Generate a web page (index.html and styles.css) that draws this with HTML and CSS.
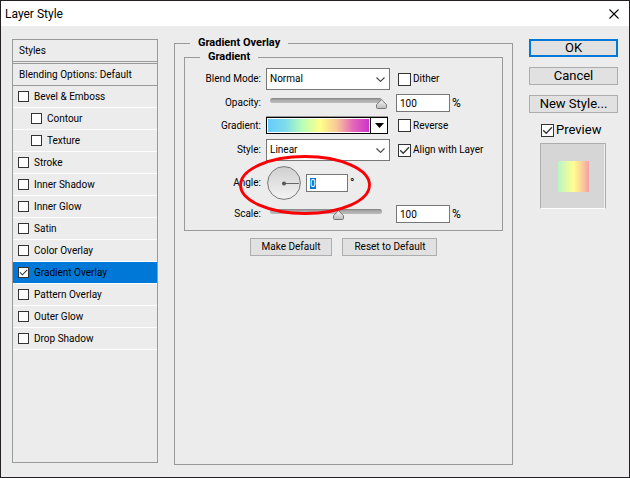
FILE: index.html
```html
<!DOCTYPE html>
<html lang="en">
<head>
  <meta charset="UTF-8">
  <meta name="viewport" content="width=device-width, initial-scale=1.0">
  <title>Layer Style</title>
  <link rel="stylesheet" href="styles.css">
</head>
<body>
  <div class="dialog">
    <header class="titlebar">
      <h1>Layer Style</h1>
      <button type="button" class="close" aria-label="Close">
        <svg width="10" height="10" viewBox="0 0 10 10"><path d="M0.5 0.5L9.5 9.5M9.5 0.5L0.5 9.5" stroke="#000" stroke-width="1.1"/></svg>
      </button>
    </header>

    <form class="content">
      <nav class="styles">
        <h2 class="styles-title">Styles</h2>
        <div class="blending">Blending Options: Default</div>
        <ul class="effects">
          <li><label><input type="checkbox">Bevel &amp; Emboss</label></li>
          <li class="sub"><label><input type="checkbox">Contour</label></li>
          <li class="sub"><label><input type="checkbox">Texture</label></li>
          <li><label><input type="checkbox">Stroke</label></li>
          <li><label><input type="checkbox">Inner Shadow</label></li>
          <li><label><input type="checkbox">Inner Glow</label></li>
          <li><label><input type="checkbox">Satin</label></li>
          <li><label><input type="checkbox">Color Overlay</label></li>
          <li class="selected"><label><input type="checkbox" checked>Gradient Overlay</label></li>
          <li><label><input type="checkbox">Pattern Overlay</label></li>
          <li><label><input type="checkbox">Outer Glow</label></li>
          <li><label><input type="checkbox">Drop Shadow</label></li>
        </ul>
      </nav>

      <fieldset class="panel">
        <legend>Gradient Overlay</legend>
        <fieldset class="group">
          <legend>Gradient</legend>
          <div class="settings">
            <label class="name" for="blend-mode">Blend Mode:</label>
            <select id="blend-mode"><option>Normal</option></select>
            <label class="check"><input type="checkbox">Dither</label>

            <label class="name" for="opacity">Opacity:</label>
            <input type="range" class="slider" value="100" aria-label="Opacity slider">
            <div class="unit-field"><input type="text" id="opacity" value="100"><span>%</span></div>

            <label class="name" for="gradient">Gradient:</label>
            <button type="button" id="gradient" class="gradient-picker">
              <span class="gradient-bar"></span>
              <span class="gradient-arrow"><svg width="9" height="5" viewBox="0 0 9 5"><path d="M0 0H9L4.5 5Z"/></svg></span>
            </button>
            <label class="check"><input type="checkbox">Reverse</label>

            <label class="name" for="style">Style:</label>
            <select id="style"><option>Linear</option></select>
            <label class="check"><input type="checkbox" checked>Align with Layer</label>

            <label class="name" for="angle">Angle:</label>
            <div class="angle">
              <svg class="dial" width="34" height="34" viewBox="0 0 34 34">
                <defs>
                  <linearGradient id="dial-fill" x1="0" y1="0" x2="0" y2="1">
                    <stop offset="0" stop-color="#cfcfcf"/>
                    <stop offset="1" stop-color="#f4f4f4"/>
                  </linearGradient>
                </defs>
                <circle cx="17" cy="17" r="16.4" fill="url(#dial-fill)" stroke="#777"/>
                <path d="M17 17.5H32" stroke="#666"/>
                <circle cx="17" cy="17.5" r="2" fill="#555"/>
              </svg>
              <input type="text" id="angle" value="0">
              <span>°</span>
              <svg class="highlight" width="134" height="62" viewBox="0 0 134 62">
                <ellipse cx="67" cy="31" rx="64.5" ry="28.5" fill="none" stroke="#fa0005" stroke-width="2.8"/>
              </svg>
            </div>

            <label class="name" for="scale">Scale:</label>
            <input type="range" class="slider" min="1" max="160" value="98" aria-label="Scale slider">
            <div class="unit-field"><input type="text" id="scale" value="100"><span>%</span></div>
          </div>
        </fieldset>
        <div class="defaults">
          <button type="button">Make Default</button>
          <button type="button">Reset to Default</button>
        </div>
      </fieldset>

      <aside class="actions">
        <button type="button" class="ok">OK</button>
        <button type="button">Cancel</button>
        <button type="button">New Style...</button>
        <div class="preview-area">
          <label class="check"><input type="checkbox" checked>Preview</label>
          <div class="preview"><div class="preview-swatch"></div></div>
        </div>
      </aside>
    </form>
  </div>

  <script>
    // Focus the angle field with its value selected
    document.getElementById("angle").select();
  </script>
</body>
</html>
```
FILE: styles.css
```css
* {
  box-sizing: border-box;
}
body {
  margin: 0;
  font-family: Roboto, "Liberation Sans", sans-serif;
  font-size: 10px;
  line-height: 14px;
  color: #000;
}
input, select, button {
  margin: 0;
  font: inherit;
  color: inherit;
}
svg {
  display: block;
}

.dialog {
  display: flex;
  flex-direction: column;
  min-height: 100vh;
  border: 1px solid #231f22;
  background-color: #ececec;
}
.titlebar {
  display: flex;
  align-items: center;
  justify-content: space-between;
  height: 25px;
  padding: 0 10px 0 4px;
  background-color: #fff;
}
.titlebar h1 {
  margin: 0;
  font-size: 12px;
  font-weight: normal;
}
.close {
  padding: 0;
  border: 0;
  background: none;
}
.content {
  flex: 1;
  display: flex;
  gap: 16px;
  padding: 13px 11px 14px;
}

/* Effect list */
.styles {
  width: 146px;
  border: 1px solid #999;
}
.styles-title, .blending {
  margin: 0;
  padding: 0 6px;
  border-bottom: 1px solid #999;
  font-size: 10px;
  font-weight: normal;
  line-height: 21px;
}
.blending {
  margin-top: 1px;
  border-top: 1px solid #999;
}
.effects {
  margin: 0;
  padding: 0;
  list-style: none;
}
.effects li {
  height: 22px;
  padding-left: 5px;
  border-bottom: 1px solid #fff;
}
.effects .sub {
  padding-left: 18px;
}
.effects .selected {
  background-color: #0078d7;
}
.effects label {
  display: flex;
  align-items: center;
  gap: 5px;
  height: 21px;
}

/* Checkboxes */
input[type="checkbox"] {
  appearance: none;
  flex: none;
  width: 13px;
  height: 13px;
  border: 1px solid #333;
  background: #fff center / 11px 11px no-repeat;
}
input[type="checkbox"]:checked {
  background-image: url("data:image/svg+xml,%3Csvg xmlns='http://www.w3.org/2000/svg' viewBox='0 0 11 11'%3E%3Cpath d='M1.2 5.3L4.2 8.3L10 2.3' fill='none' stroke='%23333' stroke-width='1.3'/%3E%3C/svg%3E");
}
.effects input[type="checkbox"] {
  width: 11px;
  height: 11px;
  background-size: 9px 9px;
}
.check {
  display: flex;
  align-items: center;
  gap: 2px;
}

/* Settings panel */
fieldset {
  min-width: 0;
  margin: 0;
  padding: 0;
  border: 1px solid #999;
}
legend {
  padding: 0 8px;
  font-size: 11px;
  font-weight: bold;
}
.panel {
  flex: 1;
  margin: -3px 0 -2px;
}
.panel > legend {
  margin-left: 15px;
}
.group {
  margin: 0 9px;
}
.group > legend {
  margin-left: 15px;
}
.settings {
  display: grid;
  grid-template-columns: 76px 124px 1fr;
  grid-template-rows: 22px 18px 19px 22px 36px 18px;
  column-gap: 5px;
  row-gap: 4px;
  align-items: center;
  padding: 4px 0 7px;
}
.settings > .check {
  margin-left: 3px;
}
.name {
  text-align: right;
}
select {
  appearance: none;
  width: 100%;
  height: 22px;
  padding: 0 3px;
  border: 1px solid #777;
  border-radius: 0;
  background: #fff right 4px center / 9px 5px no-repeat;
  background-image: url("data:image/svg+xml,%3Csvg xmlns='http://www.w3.org/2000/svg' viewBox='0 0 9 5'%3E%3Cpath d='M0.5 0.5L4.5 4.4L8.5 0.5' fill='none' stroke='%23444' stroke-width='1.1'/%3E%3C/svg%3E");
}
input[type="text"] {
  width: 54px;
  height: 18px;
  padding: 0 3px;
  border: 1px solid #777;
  background-color: #fff;
  outline: none;
}
input[type="text"]::selection {
  background-color: #0078d7;
  color: #fff;
}
.unit-field {
  display: flex;
  align-items: center;
  gap: 2px;
  margin-left: 1px;
}
.unit-field span {
  font-size: 12px;
}

/* The groove stops short of the element so the thumb can hang over both ends */
.slider {
  appearance: none;
  width: 121px;
  height: 12px;
  background: url("data:image/svg+xml,%3Csvg xmlns='http://www.w3.org/2000/svg' width='112' height='5' viewBox='0 0 112 5'%3E%3Cdefs%3E%3ClinearGradient id='t' x2='0' y2='1'%3E%3Cstop stop-color='%23808080'/%3E%3Cstop offset='.4' stop-color='%23aaa'/%3E%3Cstop offset='1' stop-color='%23bbb'/%3E%3C/linearGradient%3E%3C/defs%3E%3Crect width='112' height='5' rx='2.5' fill='url(%23t)'/%3E%3C/svg%3E") 4px 1px no-repeat;
}
.slider::-webkit-slider-runnable-track {
  height: 12px;
}
.slider::-webkit-slider-thumb {
  appearance: none;
  width: 11px;
  height: 10px;
  margin-top: 2px;
  background: url("data:image/svg+xml,%3Csvg xmlns='http://www.w3.org/2000/svg' viewBox='0 0 11 10'%3E%3Cdefs%3E%3ClinearGradient id='g' x2='0' y2='1'%3E%3Cstop stop-color='%23f8f8f8'/%3E%3Cstop offset='1' stop-color='%23bbb'/%3E%3C/linearGradient%3E%3C/defs%3E%3Cpath d='M5.5 0.7L10.5 5.7V8.5Q10.5 9.5 9.5 9.5H1.5Q0.5 9.5 0.5 8.5V5.7Z' fill='url(%23g)' stroke='%23777'/%3E%3C/svg%3E");
}

.gradient-picker {
  display: flex;
  width: 122px;
  height: 17px;
  padding: 0;
  border: 1px solid #000;
  background-color: #fff;
  box-shadow: 0 -1px #999;
}
.gradient-bar {
  flex: 1;
  margin: 1px;
  background: linear-gradient(to right, #66ccff, #80dce8 18%, #b8ffb8 34%, #ffff88 52%, #f8c898 68%, #e468b8 84%, #cc33cc);
}
.gradient-arrow {
  display: flex;
  align-items: center;
  justify-content: center;
  width: 17px;
  border-left: 1px solid #000;
}

.angle {
  grid-column: span 2;
  position: relative;
  display: flex;
  align-items: center;
  gap: 5px;
  padding-left: 1px;
}
.angle input[type="text"] {
  width: 42px;
}
.angle span {
  font-size: 12px;
  margin-left: -3px;
}
/* Red ring drawn over the angle row */
.highlight {
  position: absolute;
  top: -12px;
  left: -28px;
  pointer-events: none;
}

/* Buttons */
.defaults button, .actions button {
  height: 18px;
  padding: 0;
  border: 1px solid #adadad;
  background-color: #e1e1e1;
}
.defaults {
  display: flex;
  justify-content: center;
  gap: 10px;
  margin-top: 7px;
}
.defaults button {
  padding: 0 11px;
}

.actions {
  display: flex;
  flex-direction: column;
  gap: 10px;
  width: 89px;
  font-size: 13px;
}
.actions .ok {
  border: 2px solid #0078d7;
}
.preview-area {
  padding-left: 11px;
}
.preview-area .check {
  padding-left: 1px;
}
.preview {
  display: flex;
  align-items: center;
  justify-content: center;
  width: 66px;
  height: 66px;
  margin-top: 6px;
  border: 1px solid;
  border-color: #adadad #adadad #fff #adadad;
  background-color: #d6d6d6;
  box-shadow: inset -1px 0 #f0f0f0;
}
.preview-swatch {
  width: 31px;
  height: 31px;
  background: linear-gradient(to right, #b8f4c4, #ffff90 50%, #fcd498 75%, #f4a0a4);
}
```
